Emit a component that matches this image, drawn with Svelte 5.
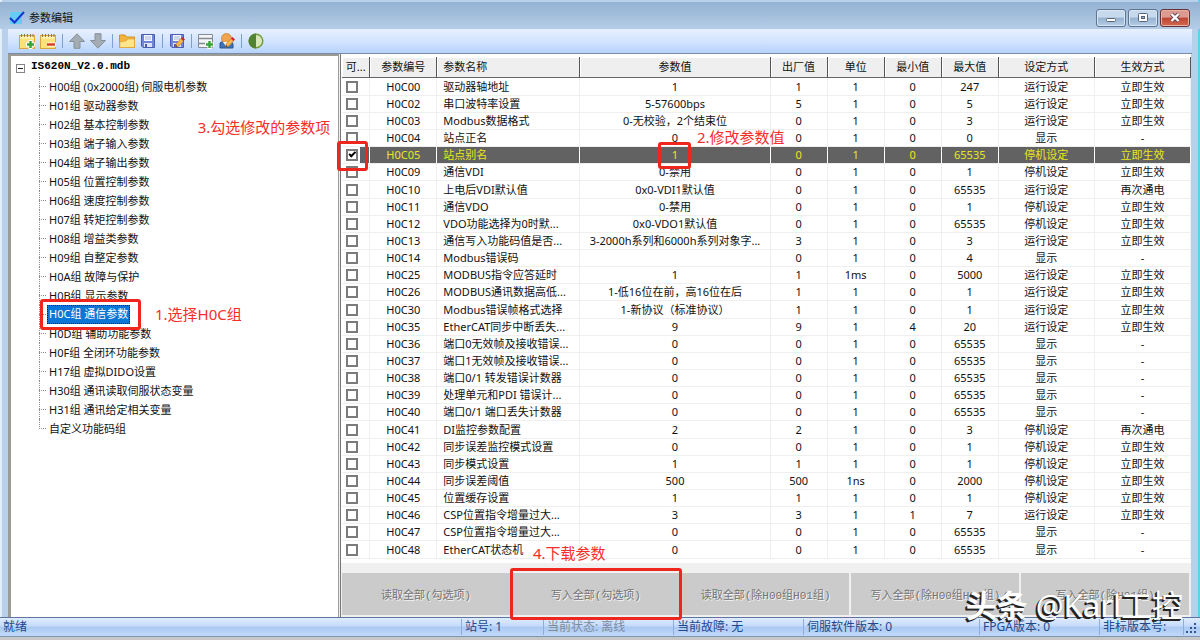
<script>
    const groups = [
        'H00组 (0x2000组) 伺服电机参数',
        'H01组 驱动器参数',
        'H02组 基本控制参数',
        'H03组 端子输入参数',
        'H04组 端子输出参数',
        'H05组 位置控制参数',
        'H06组 速度控制参数',
        'H07组 转矩控制参数',
        'H08组 增益类参数',
        'H09组 自整定参数',
        'H0A组 故障与保护',
        'H0B组 显示参数',
        'H0C组 通信参数',
        'H0D组 辅助功能参数',
        'H0F组 全闭环功能参数',
        'H17组 虚拟DIDO设置',
        'H30组 通讯读取伺服状态变量',
        'H31组 通讯给定相关变量',
        '自定义功能码组'
    ];

    const columns = ['可...', '参数编号', '参数名称', '参数值', '出厂值', '单位', '最小值', '最大值', '设定方式', '生效方式'];

    const RUN = '运行设定';
    const STOP = '停机设定';
    const SHOW = '显示';
    const NOW = '立即生效';
    const POWER = '再次通电';

    // code, name, value, default, unit, min, max, mode, effect
    const rows = [
        ['H0C00', '驱动器轴地址', '1', '1', '1', '0', '247', RUN, NOW],
        ['H0C02', '串口波特率设置', '5-57600bps', '5', '1', '0', '5', RUN, NOW],
        ['H0C03', 'Modbus数据格式', '0-无校验，2个结束位', '0', '1', '0', '3', RUN, NOW],
        ['H0C04', '站点正名', '0', '0', '1', '0', '0', SHOW, '-'],
        ['H0C05', '站点别名', '1', '0', '1', '0', '65535', STOP, NOW],
        ['H0C09', '通信VDI', '0-禁用', '0', '1', '0', '1', STOP, NOW],
        ['H0C10', '上电后VDI默认值', '0x0-VDI1默认值', '0', '1', '0', '65535', RUN, POWER],
        ['H0C11', '通信VDO', '0-禁用', '0', '1', '0', '1', STOP, NOW],
        ['H0C12', 'VDO功能选择为0时默...', '0x0-VDO1默认值', '0', '1', '0', '65535', STOP, NOW],
        ['H0C13', '通信写入功能码值是否...', '3-2000h系列和6000h系列对象字...', '3', '1', '0', '3', RUN, NOW],
        ['H0C14', 'Modbus错误码', '', '0', '1', '0', '4', SHOW, '-'],
        ['H0C25', 'MODBUS指令应答延时', '1', '1', '1ms', '0', '5000', RUN, NOW],
        ['H0C26', 'MODBUS通讯数据高低...', '1-低16位在前，高16位在后', '1', '1', '0', '1', RUN, NOW],
        ['H0C30', 'Modbus错误帧格式选择', '1-新协议（标准协议）', '1', '1', '0', '1', RUN, NOW],
        ['H0C35', 'EtherCAT同步中断丢失...', '9', '9', '1', '4', '20', RUN, NOW],
        ['H0C36', '端口0无效帧及接收错误...', '0', '0', '1', '0', '65535', SHOW, '-'],
        ['H0C37', '端口1无效帧及接收错误...', '0', '0', '1', '0', '65535', SHOW, '-'],
        ['H0C38', '端口0/1 转发错误计数器', '0', '0', '1', '0', '65535', SHOW, '-'],
        ['H0C39', '处理单元和PDI 错误计...', '0', '0', '1', '0', '65535', SHOW, '-'],
        ['H0C40', '端口0/1 端口丢失计数器', '0', '0', '1', '0', '65535', SHOW, '-'],
        ['H0C41', 'DI监控参数配置', '2', '2', '1', '0', '3', STOP, POWER],
        ['H0C42', '同步误差监控模式设置', '0', '0', '1', '0', '1', STOP, NOW],
        ['H0C43', '同步模式设置', '1', '1', '1', '0', '1', STOP, NOW],
        ['H0C44', '同步误差阈值', '500', '500', '1ns', '0', '2000', STOP, NOW],
        ['H0C45', '位置缓存设置', '1', '1', '1', '0', '1', STOP, NOW],
        ['H0C46', 'CSP位置指令增量过大...', '3', '3', '1', '1', '7', RUN, NOW],
        ['H0C47', 'CSP位置指令增量过大...', '0', '0', '1', '0', '65535', SHOW, '-'],
        ['H0C48', 'EtherCAT状态机', '0', '0', '1', '0', '65535', SHOW, '-']
    ];

    const actions = [
        '读取全部(勾选项)',
        '写入全部(勾选项)',
        '读取全部(除H00组H01组)',
        '写入全部(除H00组H01组)',
        '写入全部(除H01组)'
    ];

    let selectedGroup = $state(12);
    let checked = $state({ H0C05: true });
    let open = $state(true);
</script>

<div class="window">
    <header class="titlebar">
        <svg width="16" height="16" viewBox="0 0 16 16" aria-hidden="true">
            <rect x="1" y="2" width="12" height="12" fill="#63cdf4" />
            <path d="M1 8 L5.5 12.500 L15 2" fill="none" stroke="#1136d0" stroke-width="2" />
        </svg>
        <h1>参数编辑</h1>
        <div class="controls">
            <button aria-label="最小化">
                <svg width="28" height="16" viewBox="0 0 28 16"><rect x="9.500" y="8.500" width="9" height="3" rx="1" fill="#fff" stroke="#56657a" /></svg>
            </button>
            <button aria-label="最大化">
                <svg width="28" height="16" viewBox="0 0 28 16"><rect x="9.500" y="3.500" width="9" height="8" rx="1" fill="#fff" stroke="#56657a" /><rect x="12.500" y="6.500" width="3" height="2" fill="#8eabc9" stroke="#56657a" /></svg>
            </button>
            <button class="close" aria-label="关闭">
                <svg width="28" height="16" viewBox="0 0 28 16"><path d="M10.500 4 L17.500 11 M17.500 4 L10.500 11" stroke="#68414b" stroke-width="4" /><path d="M10.500 4 L17.500 11 M17.500 4 L10.500 11" stroke="#fff" stroke-width="2.400" /></svg>
            </button>
        </div>
    </header>

    {#snippet disk()}
        <path d="M1.500 1.500 H14.500 V14.500 H3 L1.500 13 Z" fill="#7186db" stroke="#4c5cae" />
        <rect x="4" y="2" width="8" height="6" fill="#f3f6ff" />
        <path d="M5 4 H11 M5 6 H11" stroke="#a9b5da" />
        <rect x="4" y="10" width="8" height="4" fill="#dce3f5" />
        <rect x="5" y="11" width="2" height="3" fill="#4c5cae" />
    {/snippet}
    {#snippet note()}
        <rect x="0.500" y="2.500" width="15" height="13" fill="#fbe17a" stroke="#d7a63d" />
        <path d="M1 4.500 H15" stroke="#fff3bb" stroke-width="2" />
        <path d="M2.500 1 V4 M5.500 1 V4 M8.500 1 V4 M11.500 1 V4 M14 1 V4" stroke="#8c7952" />
    {/snippet}
    {#snippet pencil()}
        <path d="M6.500 14 L7.500 10.500 L12 5.500 L14.500 8 L10 13 Z" fill="#f5b94a" stroke="#b9762c" stroke-width="0.700" />
        <path d="M12 5.500 L13.500 4 L16 6.500 L14.500 8 Z" fill="#cd2425" />
        <path d="M6.500 14 L7 12 L8.500 13.400 Z" fill="#433" />
    {/snippet}

    <nav class="toolbar">
        <button aria-label="新增">
            <svg viewBox="0 0 16 16">{@render note()}<path d="M11.500 7 V16 M7 11.500 H16" stroke="#fff" stroke-width="4" /><path d="M11.500 8 V15 M8 11.500 H15" stroke="#38a536" stroke-width="2.500" /></svg>
        </button>
        <button aria-label="删除">
            <svg viewBox="0 0 16 16">{@render note()}<path d="M7 11.500 H16" stroke="#fff" stroke-width="4" /><path d="M7 11.500 H15" stroke="#d94225" stroke-width="2.500" /></svg>
        </button>
        <i></i>
        <button aria-label="上移">
            <svg viewBox="0 0 16 16"><path d="M8 0.800 L15.500 8.500 H11 V15.300 H5 V8.500 H0.500 Z" fill="#a3abb3" stroke="#87919b" /></svg>
        </button>
        <button aria-label="下移">
            <svg viewBox="0 0 16 16"><path d="M8 15.200 L15.500 7.500 H11 V0.700 H5 V7.500 H0.500 Z" fill="#a3abb3" stroke="#87919b" /></svg>
        </button>
        <i></i>
        <button aria-label="打开">
            <svg viewBox="0 0 16 16"><path d="M0.500 14.500 V2 H6 L7.500 4 H15.500 V14.500 Z" fill="#f1b43c" stroke="#d78f21" /><path d="M0.800 14.500 V9 L7 8 L9 6 H15.500 V14.500 Z" fill="#ffe58c" stroke="#e0a535" stroke-width="0.700" /></svg>
        </button>
        <button aria-label="保存"><svg viewBox="0 0 16 16">{@render disk()}</svg></button>
        <i></i>
        <button aria-label="另存为"><svg viewBox="0 0 16 16">{@render disk()}{@render pencil()}</svg></button>
        <i></i>
        <button aria-label="添加参数">
            <svg viewBox="0 0 16 16"><path d="M0.500 1.500 H14.500 V14.500 H0.500 Z" fill="#f3f4f6" stroke="#858b94" /><path d="M1 5.500 H14 M1 10.500 H14" stroke="#858b94" stroke-width="1.500" /><path d="M11.500 7 V16 M7 11.500 H16" stroke="#fff" stroke-width="4" /><path d="M11.500 8 V15 M8 11.500 H15" stroke="#38a536" stroke-width="2.500" /></svg>
        </button>
        <button aria-label="用户">
            <svg viewBox="0 0 16 16"><path d="M1 15 V10 L4 8 H12 L14 11 V15 Z" fill="#3d73bb" stroke="#2a5289" /><circle cx="7.500" cy="5.500" r="5" fill="#f2a44f" stroke="#c37b35" stroke-width="0.700" /><path d="M4 9 L7.500 14 L10 9 Z" fill="#eef3fa" />{@render pencil()}</svg>
        </button>
        <i></i>
        <button aria-label="对比">
            <svg viewBox="0 0 16 16"><circle cx="8" cy="8" r="6.800" fill="#d5e8b6" stroke="#719a3d" stroke-width="1.400" /><path d="M8 0.500 A7.500 7.500 0 0 0 8 15.500 Z" fill="#528331" /></svg>
        </button>
    </nav>

    <main>
        <aside>
            <div class="root">
                <button class="toggle" aria-label="展开" aria-expanded={open} onclick={() => (open = !open)}>
                    <svg width="9" height="9" viewBox="0 0 9 9"><rect x="0.500" y="0.500" width="8" height="8" fill="#fff" stroke="#848484" /><path d="M2 4.500 H7" stroke="#222" /></svg>
                </button>
                <span>IS620N_V2.0.mdb</span>
            </div>
            {#if open}
                <ul>
                    {#each groups as group, i}
                        <li>
                            <button class="group" class:selected={i === selectedGroup} onclick={() => (selectedGroup = i)}>{group}</button>
                            {#if i === 12}
                                <span class="mark mark-group"></span>
                                <span class="note note-group">1.选择H0C组</span>
                            {/if}
                        </li>
                    {/each}
                </ul>
            {/if}
            <span class="note note-check">3.勾选修改的参数项</span>
        </aside>

        <section>
            <div class="list">
                <table>
                    <colgroup>
                        {#each columns as _, i}
                            <col class="c{i}" />
                        {/each}
                    </colgroup>
                    <thead>
                        <tr>
                            {#each columns as column}
                                <th>{column}</th>
                            {/each}
                        </tr>
                    </thead>
                    <tbody>
                        {#each rows as row}
                            <tr class:active={row[0] === 'H0C05'}>
                                <td class="check">
                                    <input type="checkbox" aria-label={row[0]} bind:checked={checked[row[0]]} />
                                    {#if row[0] === 'H0C05'}<span class="mark mark-check"></span>{/if}
                                </td>
                                {#each row as cell, i}
                                    <td>
                                        {cell}
                                        {#if row[0] === 'H0C05' && i === 2}
                                            <span class="mark mark-value"></span>
                                            <span class="note note-value">2.修改参数值</span>
                                        {/if}
                                    </td>
                                {/each}
                            </tr>
                        {/each}
                    </tbody>
                </table>
            </div>
            <div class="actions">
                {#each actions as action, i}
                    <div class="action">
                        <button disabled>{action}</button>
                        {#if i === 1}
                            <span class="note note-write">4.下载参数</span>
                            <span class="mark mark-write"></span>
                        {/if}
                    </div>
                {/each}
            </div>
        </section>
    </main>

    <footer>
        <span>就绪</span>
        <span>站号: 1</span>
        <span class="offline">当前状态: 离线</span>
        <span>当前故障: 无</span>
        <span>伺服软件版本: 0</span>
        <span>FPGA版本: 0</span>
        <span>非标版本号:</span>
        <svg width="14" height="14" viewBox="0 0 14 14" aria-hidden="true"><path d="M10 3h2v2h-2z M6 7h2v2h-2z M10 7h2v2h-2z M2 11h2v2h-2z M6 11h2v2h-2z M10 11h2v2h-2z" fill="#33568f" /></svg>
    </footer>
    <div class="watermark"><b>头条</b> @Karl工控</div>
</div>

<style>
    :global(body) {
        background: #c6c7c6;
    }

    .window {
        position: relative;
        display: flex;
        flex-direction: column;
        box-sizing: border-box;
        min-height: 100vh;
        padding: 2px 0 0;
        background: linear-gradient(90deg, #e2effb 2px, #b9d0ea 2px, #b9d0ea calc(100% - 2px), #5fd0ee calc(100% - 2px));
        border-bottom: 3px solid #c6c7c6;
        font-family: "Noto Sans", "Noto Sans CJK SC", sans-serif;
        font-size: 11px;
        line-height: 16px;
        color: #111;
    }

    button {
        padding: 0;
        border: 0;
        background: none;
        font: inherit;
        color: inherit;
    }

    svg {
        display: block;
    }

    .titlebar {
        display: flex;
        align-items: center;
        gap: 4px;
        height: 27px;
        padding: 4px 10px 0 9px;
        box-sizing: border-box;
        background: linear-gradient(#94b2d3, #b4cce7);
    }

    h1 {
        margin: 0;
        font-size: 11px;
        font-weight: 400;
    }

    .controls {
        display: flex;
        gap: 2px;
        margin-left: auto;
    }

    .controls button {
        border: 1px solid #5d7592;
        border-radius: 3px;
        background: linear-gradient(#c7d9ec 45%, #96b2d0 50%, #b6cee6);
        box-shadow: inset 0 0 0 1px #d8e6f4;
    }

    .controls .close {
        border-color: #67313a;
        background: linear-gradient(#dc9a90 45%, #bd4432 50%, #d66a50);
        box-shadow: inset 0 0 0 1px #e6b0a5;
    }

    .toolbar {
        display: flex;
        align-items: center;
        gap: 5px;
        height: 24px;
        margin: 0 8px;
        padding-left: 11px;
        background: linear-gradient(#e7f0ff, #d3e4fe 50%, #b7d3fb);
        border-bottom: 1px solid #7b8ca6;
    }

    .toolbar svg {
        width: 16px;
        height: 16px;
    }

    .toolbar i {
        width: 1px;
        height: 14px;
        margin: 0 1px;
        background: #7ba0d2;
    }

    main {
        display: flex;
        flex: 1;
        margin: 0 9px 0 8px;
        background: #f0f0f0;
    }

    aside {
        position: relative;
        flex: 0 0 28%;
        box-sizing: border-box;
        padding-left: 8px;
        border: solid #9d9b95;
        border-width: 2px 1px 0 3px;
        background: #fff;
    }

    .root {
        display: flex;
        align-items: center;
        gap: 6px;
        height: 19px;
        font-family: "Liberation Mono", monospace;
        font-weight: 700;
        color: #000;
    }

    .toggle {
        margin-left: -3px;
        padding-top: 6px;
    }

    ul {
        margin: 0;
        padding: 2px 0 0 20px;
        list-style: none;
    }

    li {
        position: relative;
        display: flex;
        align-items: center;
        height: 19px;
        padding-left: 8px;
    }

    li::before {
        content: "";
        position: absolute;
        left: 0;
        top: 0;
        bottom: 0;
        border-left: 1px dotted #8c8c8c;
    }

    li:last-child::before {
        bottom: 9px;
    }

    li::after {
        content: "";
        position: absolute;
        left: 0;
        top: 9px;
        width: 7px;
        border-top: 1px dotted #8c8c8c;
    }

    .group {
        padding: 0 1px;
        border: 1px solid transparent;
        white-space: nowrap;
    }

    .selected {
        padding-bottom: 1px;
        border: 1px dotted #123;
        background: #0b76d3;
        color: #fff;
    }

    section {
        display: flex;
        flex: 1;
        flex-direction: column;
        min-width: 0;
        margin-left: 1px;
        border-left: 1px solid #777;
    }

    .list {
        flex: 1;
        padding: 3px 0 0 1px;
        background: #fff;
    }

    table {
        width: 100%;
        table-layout: fixed;
        border-collapse: separate;
        border-spacing: 0;
        text-align: center;
    }

    .c0 { width: 28px; }
    .c1 { width: 67px; }
    .c2 { width: 143px; }
    .c3 { width: 190px; }
    .c4, .c5, .c6, .c7 { width: 57px; }
    .c8, .c9 { width: 96px; }

    th {
        height: 20px;
        padding: 0;
        border-right: 1px solid #555;
        border-bottom: 1px solid #666;
        background: #efefef;
        box-shadow: inset 1px 1px #fff;
        font-weight: 400;
        white-space: nowrap;
    }

    td {
        position: relative;
        height: 16px;
        padding: 0;
        border-right: 1px solid #efefef;
        border-bottom: 1px solid #efefef;
        white-space: nowrap;
    }

    tbody tr:first-child td {
        padding-top: 1px;
    }

    tr:nth-child(7n) td {
        height: 17px;
    }

    th:nth-child(3),
    td:nth-child(3) {
        padding-left: 6px;
        text-align: left;
    }

    .active td {
        border-right-color: #fff;
        background: #626262;
        color: #e8e81c;
    }

    .active .check {
        background: linear-gradient(90deg, #fff 18px, #626262 18px);
    }

    .check input {
        display: block;
        appearance: none;
        width: 12px;
        height: 12px;
        margin: 0 0 0 4px;
        border: 2px solid #7b7b7b;
        background: #fff;
    }

    .check input:checked::before {
        content: "";
        display: block;
        width: 5px;
        height: 2px;
        margin: 1px 0 0 1px;
        border: solid #000;
        border-width: 0 0 2px 2px;
        box-sizing: content-box;
        transform: rotate(-45deg);
        transform-origin: 3px 2px;
    }

    .actions {
        display: grid;
        grid-template-columns: repeat(5, 1fr);
        gap: 2px;
        padding: 10px 2px 2px 1px;
    }

    .action {
        position: relative;
    }

    .action button {
        display: block;
        width: 100%;
        height: 42px;
        padding-top: 3px;
        background: #cbcbcb;
        font-family: "Liberation Mono", "Noto Sans CJK SC", monospace;
        color: #747474;
        text-shadow: 1px 1px #f4f4f4;
    }

    .mark {
        position: absolute;
        z-index: 2;
        box-sizing: border-box;
        border: 3px solid #ee261e;
        border-radius: 3px;
        pointer-events: none;
    }

    .mark-group {
        left: 1px;
        top: -6px;
        width: 101px;
        height: 31px;
    }

    .mark-check {
        left: -5px;
        top: -6px;
        width: 31px;
        height: 30px;
    }

    .mark-value {
        left: calc(50% - 17px);
        top: -5px;
        width: 33px;
        height: 27px;
    }

    .mark-write {
        inset: -5px -2px;
    }

    .note {
        position: absolute;
        z-index: 2;
        font-size: 15px;
        line-height: 20px;
        white-space: nowrap;
        color: #f52e28;
    }

    .note-group {
        left: 116px;
        top: -1px;
    }

    .note-check {
        right: 8px;
        top: 61px;
    }

    .note-value {
        left: calc(50% + 22px);
        top: -20px;
    }

    .note-write {
        left: 21px;
        top: -30px;
    }

    footer {
        display: grid;
        grid-template-columns: 462fr 82fr 130fr 130fr 176fr 120fr 84fr 16fr;
        align-items: center;
        box-sizing: border-box;
        height: 20px;
        border-top: 1px solid #5c769e;
        border-bottom: 1px solid #8094b4;
        background: linear-gradient(#e0ecff, #c4dafb 45%, #abc9f3 50%, #c0d9f9);
        font-size: 12px;
        color: #20488c;
        white-space: nowrap;
    }

    footer span {
        padding-left: 3px;
        border-right: 1px solid #8daedc;
    }

    footer .offline {
        color: #7d8ba0;
    }

    .watermark {
        position: absolute;
        right: 17px;
        bottom: 14px;
        z-index: 3;
        font-size: 31px;
        line-height: 36px;
        color: #fff;
        text-shadow: -1px 1px #222, -2px 2px #222;
        white-space: nowrap;
    }
</style>
